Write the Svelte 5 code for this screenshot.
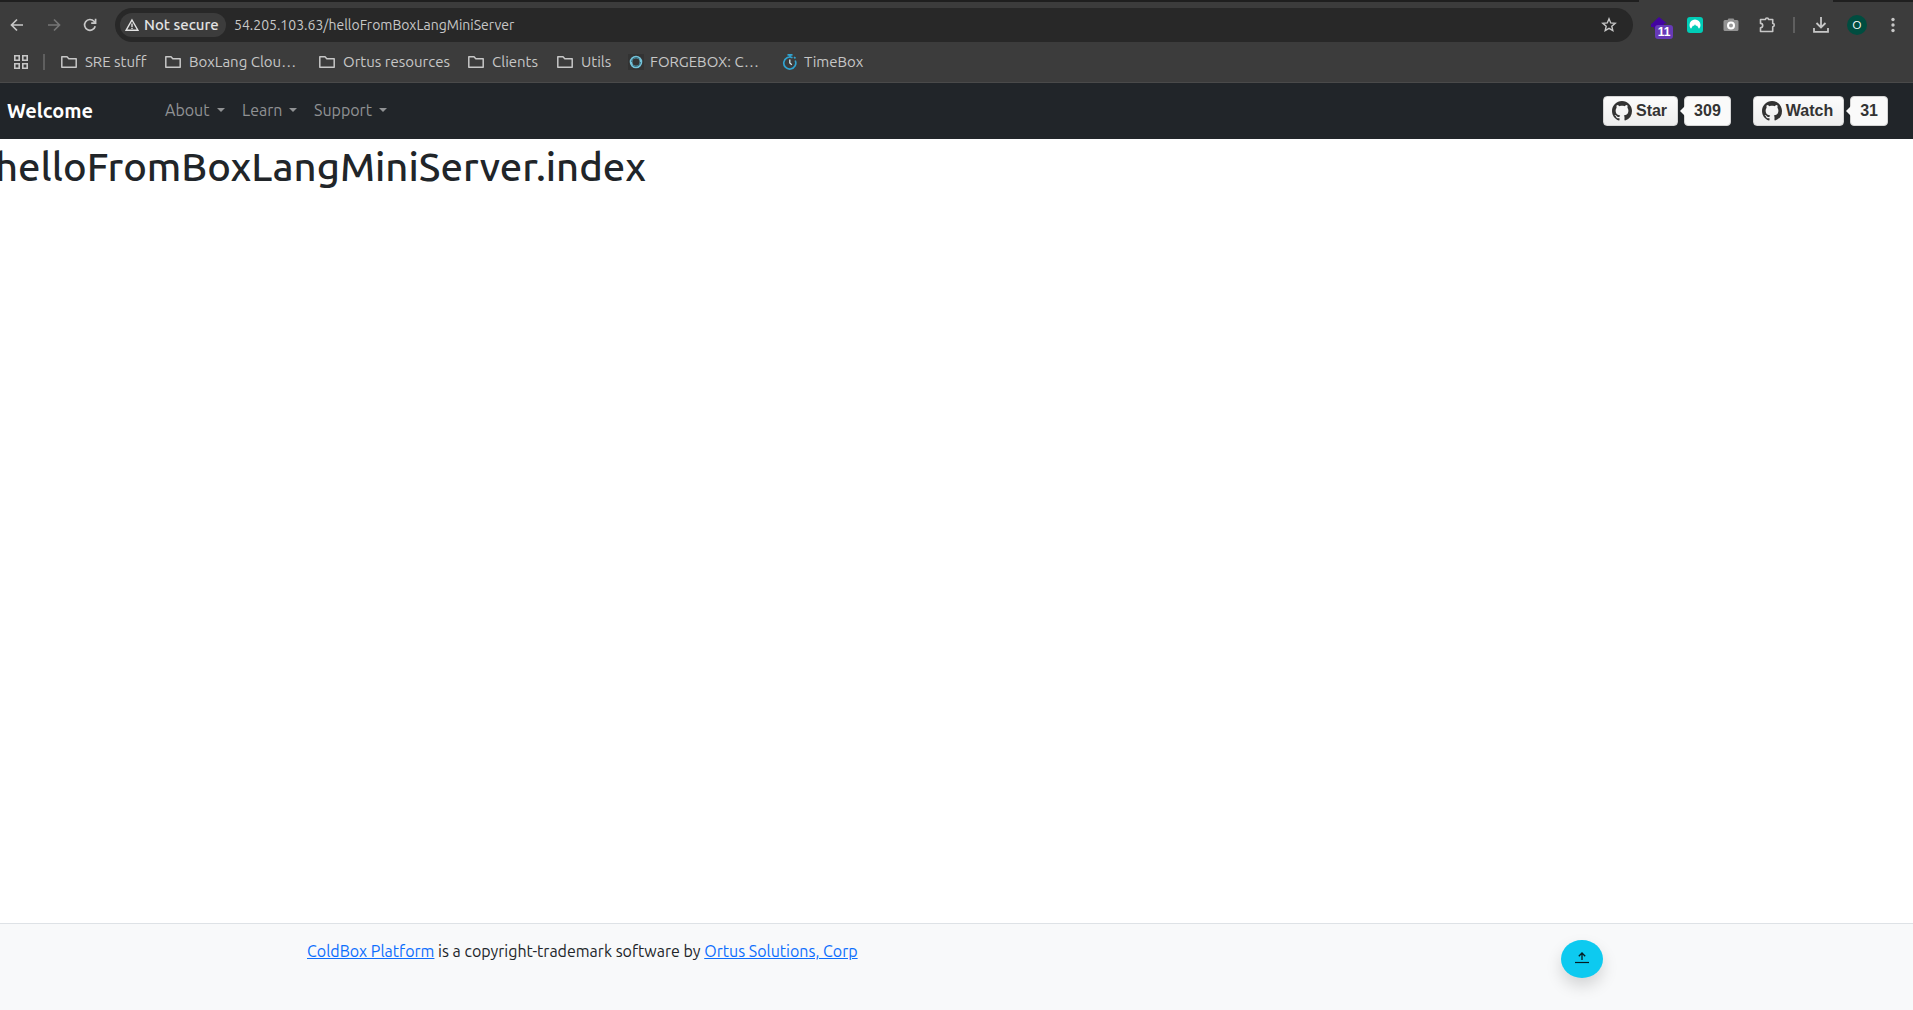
<script>
  const bookmarks = [
    { label: 'SRE stuff', icon: 'folder', size: 'w104' },
    { label: 'BoxLang Clou…', icon: 'folder', size: 'w154' },
    { label: 'Ortus resources', icon: 'folder', size: 'w149' },
    { label: 'Clients', icon: 'folder', size: 'w89' },
    { label: 'Utils', icon: 'folder', size: 'w71' },
    { label: 'FORGEBOX: C…', icon: 'forge', size: 'w154' },
    { label: 'TimeBox', icon: 'time', size: 'w104' }
  ];
  const menus = [
    { label: 'About', size: 'w77' },
    { label: 'Learn', size: 'w72' },
    { label: 'Support', size: 'w77' }
  ];
  const counters = [
    { label: 'Star', count: 309 },
    { label: 'Watch', count: 31 }
  ];
  let address = $state('54.205.103.63/helloFromBoxLangMiniServer');
</script>

<div class="page">
  <div class="browser">
    <div class="tabstrip"><span class="active-tab"></span></div>
    <div class="toolbar">
      <button class="tool" aria-label="Back">
        <svg width="16" height="16" viewBox="0 0 16 16" fill="none" stroke="#c7c7c7" stroke-width="1.7"><path d="M13 8H2M7 2.500 1.500 8 7 13.500" /></svg>
      </button>
      <button class="tool" aria-label="Forward">
        <svg width="16" height="16" viewBox="0 0 16 16" fill="none" stroke="#757575" stroke-width="1.7"><path d="M2 8h11M8 2.5 13.5 8 8 13.5" /></svg>
      </button>
      <button class="tool" aria-label="Reload">
        <svg width="16" height="16" viewBox="0 0 16 16" fill="none" stroke="#c7c7c7" stroke-width="1.7"><path d="M13.2 9.2A5.4 5.4 0 1 1 12 4.3L13.6 6M13.6 1.800V6.2H9.2" /></svg>
      </button>
      <div class="omnibox">
        <button class="secure">
          <svg width="14" height="14" viewBox="0 0 14 14" fill="none" stroke="#e3e3e3" stroke-width="1.4"><path d="M7 2 13 12.3H1ZM7 5.5V9M7 9.8v1.3" /></svg>
          Not secure
        </button>
        <input class="address" aria-label="Address" bind:value={address} spellcheck="false" />
        <button class="tool" aria-label="Bookmark this page">
          <svg width="16" height="16" viewBox="0 0 16 16" fill="none" stroke="#c7c7c7" stroke-width="1.4"><path d="m8 1.8 1.7 4.1 4.5.4-3.4 2.9 1 4.4L8 11.3l-3.8 2.3 1-4.4L1.8 6.3l4.5-.4Z" /></svg>
        </button>
      </div>
      <div class="extensions">
        <button class="tool purple" aria-label="Extension, 11 items">
          <svg width="22" height="22" viewBox="0 0 22 22"><path d="M8 0 16 6.5H13V12H3V10H0V7L1 6.5Z" fill="#4304a0" /></svg>
          <span class="count">11</span>
        </button>
        <button class="tool" aria-label="VPN extension">
          <svg width="16" height="16" viewBox="0 0 16 16"><rect width="16" height="16" rx="3" fill="#00cdb7" /><path d="M4 11.800A5.500 5.500 0 1 1 12 11.800L10 8.500l-.9.5L8 7.300 6.900 9 6 8.500Z" fill="#fff" /></svg>
        </button>
        <button class="tool" aria-label="Screenshot extension">
          <svg width="16" height="16" viewBox="0 0 16 16"><path d="M2 3h2.500L5.500 1.500h5L11.500 3H14a1.500 1.500 0 0 1 1.500 1.500v8A1.500 1.500 0 0 1 14 14H2A1.500 1.500 0 0 1 .5 12.500v-8A1.500 1.500 0 0 1 2 3Z" fill="#939393" /><circle cx="8" cy="8.500" r="3" fill="#999" stroke="#fff" stroke-width="2" /></svg>
        </button>
        <button class="tool" aria-label="Extensions">
          <svg width="18" height="18" viewBox="0 0 18 18" fill="none" stroke="#c7c7c7" stroke-width="1.600"><path d="M2.500 3.500H7.500a1.500 1.500 0 0 1 3 0H14.700V7.500a1.600 1.600 0 0 1 0 3.200V15.500H2.500V11.800a2.200 2.200 0 0 0 0-4.400Z" stroke-linejoin="round" /></svg>
        </button>
        <span class="divider short"></span>
        <button class="tool" aria-label="Downloads">
          <svg width="16" height="16" viewBox="0 0 16 16" fill="none" stroke="#c7c7c7" stroke-width="1.800"><path d="M8 0V10M3.500 6 8 10.500 12.500 6M1 11V14.800H15V11" /></svg>
        </button>
        <button class="tool profile" aria-label="Profile">O</button>
        <button class="tool" aria-label="Menu">
          <svg width="16" height="16" viewBox="0 0 16 16" fill="#c7c7c7"><circle cx="8" cy="2.500" r="1.700" /><circle cx="8" cy="8" r="1.700" /><circle cx="8" cy="13.500" r="1.700" /></svg>
        </button>
      </div>
    </div>
    <div class="bookmarks">
      <button class="tool apps" aria-label="Apps">
        <svg width="14" height="14" viewBox="0 0 14 14" fill="none" stroke="#c7c7c7" stroke-width="1.600"><path d="M.8.8H5.200V5.200H.8ZM8.800.8h4.400V5.200H8.800ZM.8 8.800H5.200v4.400H.8ZM8.800 8.800h4.400v4.400H8.800Z" /></svg>
      </button>
      <span class="divider"></span>
      {#each bookmarks as mark}
        <button class="bookmark {mark.size} {mark.icon}">
          {#if mark.icon === 'folder'}
            <svg width="16" height="16" viewBox="0 0 16 16" fill="none" stroke="#c7c7c7" stroke-width="1.500"><path d="M.8 2.800H6L7.800 4.800H15.200V13.200H.8Z" stroke-linejoin="round" /></svg>
          {:else if mark.icon === 'forge'}
            <svg width="16" height="16" viewBox="0 0 16 16"><rect width="16" height="16" fill="#333" /><circle cx="8" cy="8" r="5" fill="none" stroke="#75c2d8" stroke-width="2.600" /><path d="M3.500 8a4.600 4.600 0 0 1 8-3M12.500 8a4.600 4.600 0 0 1-8 3" fill="none" stroke="#2c6678" stroke-width=".9" /></svg>
          {:else}
            <svg width="16" height="16" viewBox="0 0 16 16" fill="none"><path d="M10.500 3.700A6 6 0 1 0 13.200 6.500M5.500.9h5M8 1v2.500M12 3.200l1.500 1.200" stroke="#31a3d0" stroke-width="1.700" /><path d="M7.800 5.500V9l2 1.700" stroke="#d3e8ef" stroke-width="1.300" /></svg>
          {/if}
          <span>{mark.label}</span>
        </button>
      {/each}
    </div>
  </div>

  <nav class="navbar">
    <a class="brand" href="#home">Welcome</a>
    <div class="menus">
      {#each menus as menu}
        <button class="menu {menu.size}">{menu.label}<span class="caret"></span></button>
      {/each}
    </div>
    <div class="github">
      {#each counters as item}
        <div class="pair">
          <a class="gh-button" href="#{item.label}">
            <svg width="20" height="20" viewBox="0 0 16 16" fill="#333"><path d="M8 0C3.580 0 0 3.580 0 8c0 3.540 2.290 6.530 5.470 7.590.4.070.550-.170.550-.380 0-.190-.010-.820-.010-1.490-2.010.370-2.530-.490-2.690-.940-.090-.230-.480-.940-.820-1.130-.280-.150-.680-.520-.010-.530.630-.010 1.080.580 1.230.820.720 1.210 1.870.870 2.330.660.070-.520.280-.870.510-1.070-1.780-.2-3.640-.890-3.640-3.950 0-.870.310-1.590.820-2.150-.080-.2-.360-1.020.080-2.120 0 0 .670-.210 2.200.820.640-.180 1.320-.270 2-.270s1.360.090 2 .270c1.530-1.040 2.200-.820 2.200-.820.440 1.100.160 1.920.080 2.120.510.560.820 1.270.820 2.150 0 3.070-1.870 3.750-3.650 3.950.290.250.540.730.540 1.480 0 1.070-.010 1.930-.010 2.200 0 .210.150.460.550.380A8.010 8.010 0 0 0 16 8c0-4.420-3.580-8-8-8Z" /></svg>
            {item.label}
          </a>
          <a class="gh-count" href="#{item.label}-count">{item.count}</a>
        </div>
      {/each}
    </div>
  </nav>

  <main><h1>helloFromBoxLangMiniServer.index</h1></main>

  <footer>
    <div class="container">
      <p><a href="#coldbox">ColdBox Platform</a> is a copyright-trademark software by <a href="#ortus">Ortus Solutions, Corp</a></p>
      <a class="top" href="#top" aria-label="Back to top">
        <svg width="14" height="14" viewBox="0 0 14 14" fill="none" stroke="#051c22"><path d="M7 8V1M3.800 4.200 7 1l3.200 3.200" stroke-width="1.300" /><path d="M0 10.500H14" stroke-width="1.200" /></svg>
      </a>
    </div>
  </footer>
</div>

<style>
  :global(body) { margin: 0; }
  * { box-sizing: border-box; }
  .page {
    min-height: 100vh;
    display: flex;
    flex-direction: column;
    overflow: hidden;
    background: #fff;
    color: #212529;
    font-family: Ubuntu, "Noto Sans", sans-serif;
    font-size: 16px;
    line-height: 24px;
  }
  button, input { font: inherit; color: inherit; border: 0; padding: 0; margin: 0; background: none; }
  a { color: #0d6efd; }
  svg { flex: none; display: block; }
  .browser { background: #3c3c3c; border-bottom: 1px solid #4a4a4a; color: #c7c7c7; font-size: 15px; line-height: 20px; }
  .tabstrip { display: flex; justify-content: flex-end; height: 2px; padding-right: 80px; background: #1f1f1f; }
  .active-tab { width: 194px; background: #3c3c3c; }
  .toolbar { display: flex; align-items: center; height: 46px; }
  .tool { display: flex; align-items: center; justify-content: center; width: 36px; height: 34px; flex: none; }
  .omnibox { flex: 1; display: flex; align-items: center; height: 34px; margin-left: 7px; padding: 0 6px 0 5px; border-radius: 17px; background: #282828; }
  .secure { display: flex; align-items: center; gap: 5px; width: 106px; height: 24px; padding-left: 5px; border-radius: 12px; background: #3c3c3c; color: #e3e3e3; font-size: 15px; font-weight: 500; white-space: nowrap; }
  .address { flex: 1; min-width: 0; margin-left: 8px; outline: 0; font-size: 14px; color: #c7c7c7; }
  .extensions { display: flex; align-items: center; padding: 0 2px 0 8px; }
  .purple { position: relative; }
  .purple svg { margin-left: 6px; margin-top: 6px; }
  .count { position: absolute; left: 14px; top: 17px; width: 18px; height: 14px; border-radius: 3px; background: #673ab7; color: #fff; font: bold 12px/14px "Liberation Sans", Arial, sans-serif; }
  .divider { width: 2px; height: 16px; background: #5f5f5f; }
  .divider.short { margin: 0 8px; }
  .profile { width: 20px; height: 20px; margin: 0 8px; border-radius: 50%; background: #004d40; color: #fff; font-size: 12px; }
  .bookmarks { display: flex; align-items: center; height: 34px; padding: 0 0 6px 3px; }
  .bookmarks .divider { margin: 0 16px 0 4px; }
  .bookmark { display: flex; align-items: center; gap: 8px; white-space: nowrap; }
  .bookmark.forge, .bookmark.time { gap: 6px; }
  .w71 { width: 71px; }
  .w72 { width: 72px; }
  .w77 { width: 77px; }
  .w89 { width: 89px; }
  .w104 { width: 104px; }
  .w149 { width: 149px; }
  .w154 { width: 154px; }
  .navbar { display: flex; align-items: center; height: 56px; padding: 0 25px 0 7px; background: #212529; }
  .brand { width: 158px; color: #fff; font-size: 20px; line-height: 30px; font-weight: 600; text-decoration: none; }
  .menus { display: flex; flex: 1; padding-bottom: 2px; }
  .menu { display: flex; align-items: center; gap: 7px; color: #909294; }
  .caret { border: 4px solid transparent; border-top-color: currentColor; border-bottom: 0; }
  .github { display: flex; gap: 22px; font: bold 16px/20px "Liberation Sans", Arial, sans-serif; }
  .pair { display: flex; gap: 6px; }
  .gh-button, .gh-count { height: 30px; border: 1px solid #d4d4d4; border-radius: 4px; color: #333; text-decoration: none; display: flex; align-items: center; }
  .gh-button { gap: 4px; padding: 0 10px 0 8px; background: linear-gradient(#fcfcfc, #eee); }
  .gh-count { position: relative; padding: 0 9px; background: #fafafa; }
  .gh-count::before { content: ""; position: absolute; left: -5px; top: 9px; border: 5px solid transparent; border-left: 0; border-right-color: #fafafa; }
  main { flex: 1; }
  h1 { margin: 4px 0 8px -5px; font-size: 40px; line-height: 48px; font-weight: 500; }
  footer { height: 87px; padding: 15px 3px 0 0; border-top: 1px solid #dee2e6; background: #f8f9fa; }
  .container { display: flex; justify-content: space-between; max-width: 1320px; margin: 0 auto; padding: 0 12px; }
  p { margin: 0; }
  .top { display: flex; align-items: center; justify-content: center; width: 42px; height: 38px; margin-top: 1px; border-radius: 50%; background: #0dcaf0; box-shadow: 0 8px 16px rgba(0, 0, 0, .15); }
</style>
